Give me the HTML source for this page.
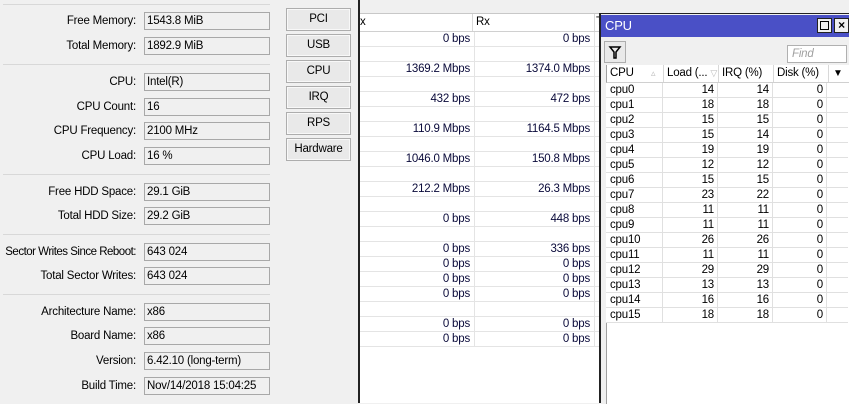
<!DOCTYPE html>
<html><head><style>
*{margin:0;padding:0;box-sizing:border-box}
body{width:849px;height:403px;overflow:hidden;background:#f0f0f0;font-family:"Liberation Sans",sans-serif;font-size:11.5px;letter-spacing:-0.2px;color:#000;position:relative}
.a{position:absolute}
.lbl{position:absolute;right:713px;text-align:right;white-space:nowrap;line-height:18px}
.fld{position:absolute;left:144px;width:126px;height:18px;border:1px solid #a8a8a8;background:#f0f0f0;padding-left:2px;line-height:16px;white-space:nowrap}
.sep{position:absolute;left:3px;width:267px;height:1px;background:#d8d8d8}
.btn{position:absolute;left:286px;width:65px;height:23px;border:1px solid #adadad;background:#e9e9e9;text-align:center;line-height:21px;box-shadow:inset 0 0 0 1px #f8f8f8}
.mid{position:absolute;left:358px;top:0;width:242px;height:403px;background:#fff;border-left:2px solid #222}
.row{position:absolute;left:0;width:240px;height:15px;border-bottom:1px solid #e4e4e4;line-height:14px;color:#0a0a3a}
.row span{position:absolute;text-align:right}
.win{position:absolute;left:599px;top:13px;width:250px;height:390px;background:#f0f0f0;border-left:2px solid #222;border-top:1px solid #222}
.cr{position:absolute;left:5px;width:242px;height:15px;border-bottom:1px solid #e0e0e0;line-height:14px;background:#fff}
.cr span{position:absolute;text-align:right}
</style></head><body>
<div class="sep" style="top:4px"></div>
<div class="lbl" style="top:12px">Free Memory:</div><div class="fld" style="top:12px">1543.8 MiB</div>
<div class="lbl" style="top:37px">Total Memory:</div><div class="fld" style="top:37px">1892.9 MiB</div>
<div class="sep" style="top:64px"></div>
<div class="lbl" style="top:73px">CPU:</div><div class="fld" style="top:73px">Intel(R)</div>
<div class="lbl" style="top:98px">CPU Count:</div><div class="fld" style="top:98px">16</div>
<div class="lbl" style="top:122px">CPU Frequency:</div><div class="fld" style="top:122px">2100 MHz</div>
<div class="lbl" style="top:147px">CPU Load:</div><div class="fld" style="top:147px">16 %</div>
<div class="sep" style="top:174px"></div>
<div class="lbl" style="top:183px">Free HDD Space:</div><div class="fld" style="top:183px">29.1 GiB</div>
<div class="lbl" style="top:207px">Total HDD Size:</div><div class="fld" style="top:207px">29.2 GiB</div>
<div class="sep" style="top:234px"></div>
<div class="lbl" style="top:243px;letter-spacing:-0.5px">Sector Writes Since Reboot:</div><div class="fld" style="top:243px">643 024</div>
<div class="lbl" style="top:267px">Total Sector Writes:</div><div class="fld" style="top:267px">643 024</div>
<div class="sep" style="top:294px"></div>
<div class="lbl" style="top:303px">Architecture Name:</div><div class="fld" style="top:303px">x86</div>
<div class="lbl" style="top:327px">Board Name:</div><div class="fld" style="top:327px">x86</div>
<div class="lbl" style="top:352px">Version:</div><div class="fld" style="top:352px">6.42.10 (long-term)</div>
<div class="lbl" style="top:377px">Build Time:</div><div class="fld" style="top:377px">Nov/14/2018 15:04:25</div>

<div class="btn" style="top:8px">PCI</div>
<div class="btn" style="top:34px">USB</div>
<div class="btn" style="top:60px">CPU</div>
<div class="btn" style="top:86px">IRQ</div>
<div class="btn" style="top:112px">RPS</div>
<div class="btn" style="top:138px">Hardware</div>

<div class="mid">
<div class="a" style="left:0;top:0;width:240px;height:14px;background:#f0f0f0;border-bottom:1px solid #c8c8c8"></div>
<div class="a" style="left:0;top:14px;width:240px;height:18px;background:#fff;border-bottom:1px solid #d0d0d0;line-height:17px">
<span class="a" style="left:0">x</span><span class="a" style="left:112px;border-left:1px solid #d8d8d8;padding-left:3px;height:17px">Rx</span><span class="a" style="left:234px;border-left:1px solid #d8d8d8;padding-left:1px;height:17px">T</span></div>
<div class="a" style="left:114px;top:32px;width:1px;height:315px;background:#e4e4e4"></div>
<div class="a" style="left:234px;top:32px;width:1px;height:315px;background:#e4e4e4"></div>
<div class="row" style="top:32px"><span style="right:130px">0 bps</span><span style="right:10px">0 bps</span></div>
<div class="row" style="top:47px"></div>
<div class="row" style="top:62px"><span style="right:130px">1369.2 Mbps</span><span style="right:10px">1374.0 Mbps</span></div>
<div class="row" style="top:77px"></div>
<div class="row" style="top:92px"><span style="right:130px">432 bps</span><span style="right:10px">472 bps</span></div>
<div class="row" style="top:107px"></div>
<div class="row" style="top:122px"><span style="right:130px">110.9 Mbps</span><span style="right:10px">1164.5 Mbps</span></div>
<div class="row" style="top:137px"></div>
<div class="row" style="top:152px"><span style="right:130px">1046.0 Mbps</span><span style="right:10px">150.8 Mbps</span></div>
<div class="row" style="top:167px"></div>
<div class="row" style="top:182px"><span style="right:130px">212.2 Mbps</span><span style="right:10px">26.3 Mbps</span></div>
<div class="row" style="top:197px"></div>
<div class="row" style="top:212px"><span style="right:130px">0 bps</span><span style="right:10px">448 bps</span></div>
<div class="row" style="top:227px"></div>
<div class="row" style="top:242px"><span style="right:130px">0 bps</span><span style="right:10px">336 bps</span></div>
<div class="row" style="top:257px"><span style="right:130px">0 bps</span><span style="right:10px">0 bps</span></div>
<div class="row" style="top:272px"><span style="right:130px">0 bps</span><span style="right:10px">0 bps</span></div>
<div class="row" style="top:287px"><span style="right:130px">0 bps</span><span style="right:10px">0 bps</span></div>
<div class="row" style="top:302px"></div>
<div class="row" style="top:317px"><span style="right:130px">0 bps</span><span style="right:10px">0 bps</span></div>
<div class="row" style="top:332px"><span style="right:130px">0 bps</span><span style="right:10px">0 bps</span></div>
</div>

<div class="win">
<div class="a" style="left:0;top:1px;width:248px;height:22px;background:#4a50c6;color:#fff;font-size:13px;line-height:22px;padding-left:4px">CPU</div>
<div class="a" style="left:216px;top:4px;width:15px;height:15px;background:#f0f0f0;border:1px solid #222"><div class="a" style="left:2px;top:2px;width:9px;height:9px;border:1px solid #000"></div></div>
<div class="a" style="left:233px;top:4px;width:15px;height:15px;background:#f0f0f0;border:1px solid #222;font-size:12px;font-weight:bold;line-height:13px;text-align:center">×</div>
<div class="a" style="left:3px;top:27px;width:22px;height:22px;border:1px solid #adadad;background:#e9e9e9">
<svg width="20" height="20" viewBox="0 0 20 20" style="position:absolute;left:0;top:0"><path d="M5 5H15L11 10V16H9V10Z" fill="none" stroke="#000" stroke-width="1.5"/></svg></div>
<div class="a" style="left:186px;top:31px;width:60px;height:18px;background:#fff;border:1px solid #b0b0b0;color:#a0a0a0;font-style:italic;line-height:16px;padding-left:4px">Find</div>
<div class="a" style="left:5px;top:51px;width:243px;height:18px;background:#fff;border-bottom:1px solid #d0d0d0;border-left:1px solid #a0a0a0;line-height:17px">
<span class="a" style="left:3px">CPU</span><span class="a" style="left:44px;color:#bbb;font-size:9px">▵</span>
<span class="a" style="left:56px;border-left:1px solid #d8d8d8;padding-left:3px;height:17px;width:55px;white-space:nowrap;overflow:hidden">Load (...<span style="color:#bbb;font-size:9px;margin-left:3px">▽</span></span>
<span class="a" style="left:111px;border-left:1px solid #d8d8d8;padding-left:3px;height:17px">IRQ (%)</span>
<span class="a" style="left:166px;border-left:1px solid #d8d8d8;padding-left:3px;height:17px">Disk (%)</span>
<span class="a" style="left:221px;border-left:1px solid #d8d8d8;padding-left:4px;height:17px;font-size:10px">▼</span></div>
<div class="a" style="left:5px;top:69px;width:243px;height:321px;background:#fff;border-left:1px solid #a0a0a0"></div>
<div id="cpus"></div>
</div>
<script>
var d=[[14,14],[18,18],[15,15],[15,14],[19,19],[12,12],[15,15],[23,22],[11,11],[11,11],[26,26],[11,11],[29,29],[13,13],[16,16],[18,18]],h='';
for(var i=0;i<16;i++){h+='<div class="cr" style="top:'+(69+15*i)+'px"><span style="left:4px">cpu'+i+'</span><span style="left:56px;width:55px;padding-right:3px;border-left:1px solid #e0e0e0;height:15px">'+d[i][0]+'</span><span style="left:111px;width:55px;padding-right:3px;border-left:1px solid #e0e0e0;height:15px">'+d[i][1]+'</span><span style="left:166px;width:55px;padding-right:3px;border-left:1px solid #e0e0e0;border-right:1px solid #e0e0e0;height:15px">0</span></div>';}
document.getElementById('cpus').innerHTML=h;
</script>
</body></html>
